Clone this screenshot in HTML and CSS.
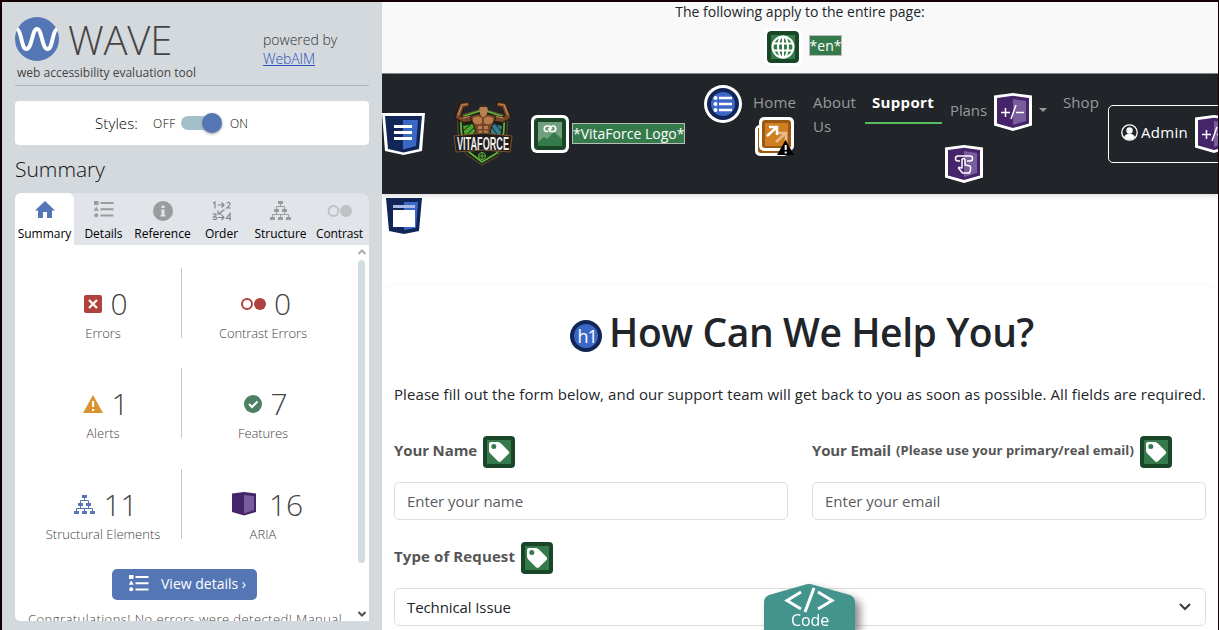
FILE: index.html
```html
<!DOCTYPE html>
<html lang="en">
<head>
<meta charset="utf-8">
<title>WAVE</title>
<link rel="stylesheet" href="styles.css">
</head>
<body>
<svg class="defs" width="0" height="0">
  <symbol id="list" viewBox="0 0 20 18"><path d="M0 1h4.500v4h-4.500zM6.500 2h13v2h-13zM2.200 6.500L4.800 10.800H-.300zM6.500 8.300h13v2h-13zM6.500 14.500h13v2h-13z"/><circle cx="2.200" cy="15.300" r="2"/></symbol>
  <symbol id="tree" viewBox="0 0 21 19"><path d="M8 0h5v3H8zM4 8h5v3H4zM12 8h5v3h-5zM0 16h5v3H0zM8 16h5v3H8zM16 16h5v3h-5z"/><path d="M10.500 3v3M6.500 8V5.500h8V8M6.500 11v2.500M14.500 11v2.500M2.500 16v-2.500h16V16M10.500 13.500V16" fill="none" stroke="currentColor"/></symbol>
  <symbol id="shield" viewBox="0 0 38 38"><path d="M0 2.500L19 0l19 2.500v30L19 38 0 32.500z" fill="#fff"/><path d="M3 5l16-2.300L35 5v25.500L19 35 3 30.500z" fill="#452469"/><path d="M19 6l13 2v20l-13 4z" fill="#795c9b"/></symbol>
  <symbol id="tag" viewBox="0 0 32 32"><rect width="32" height="32" rx="4" fill="#1a4628"/><path d="M4 4h24v24H4z" fill="#357a4b"/><path fill-rule="evenodd" d="M6 8q0-2 2-2h7q1.500 0 3 1.500l7.500 7.500q1.500 1.500 0 3L18 25.300q-1.500 1.200-3 0L7.300 17.500Q6 16 6 14.500zM13.300 10.500a2.500 2.500 0 1 0-5 0a2.500 2.500 0 1 0 5 0" fill="#fff"/></symbol>
</svg>
<div class="frame">
<aside class="side">
  <header class="brand">
    <div class="brand-left">
      <div class="logo">
        <svg width="44" height="44" viewBox="0 0 44 44"><circle cx="22" cy="22" r="22" fill="#5576b4"/><path d="M2 12C7 14 6 32 11.500 32S17 12 22 12s5 20 10.500 20S37 14 42 12" fill="none" stroke="#fff" stroke-width="4"/></svg>
        <span class="t wave">WAVE</span>
      </div>
      <div><span class="t tagline">web accessibility evaluation tool</span></div>
    </div>
    <div class="powered"><span class="t">powered by</span><br><a class="t aim">WebAIM</a></div>
  </header>
  <div class="styles-box"><span class="t sty">Styles:</span><span class="t off">OFF</span><div class="toggle"><i></i></div><span class="t on">ON</span></div>
  <h2><span class="t">Summary</span></h2>
  <nav class="tabs">
    <div class="tab active"><svg width="20" height="18" viewBox="0 0 20 18"><path d="M10 0L20 9.500h-3V17h-5v-6H8v6H3V9.500H0z" fill="#5576b4"/></svg><span class="t">Summary</span></div>
    <div class="tab"><svg class="g list-i" width="20" height="18"><use href="#list"/></svg><span class="t">Details</span></div>
    <div class="tab"><svg width="20" height="20"><circle cx="10" cy="10" r="10" fill="#999b9f"/><path d="M8.500 4.500h3v2.500h-3zM8 8.500h3.500v5.500h1v1.500H7.500V14h1v-4H8z" fill="#e1e4e8"/></svg><span class="t">Reference</span></div>
    <div class="tab"><svg width="20" height="20" fill="none" stroke="#85878b" stroke-width="1.200"><path d="M1 2.500L3 1v6.500M6 4h6M9.500 1.500L12 4 9.500 6.500M14.800 2.500q2-2.500 3.300 0 0 1.500-3.300 4.500h4M12.500 8.500l-6 4.500M6 9.500V13h3.500M.800 13.500q4-1.500 3 1.200L2 15.800q4 0 2 2.500H.800M6 16.500h6M9.500 14l2.500 2.500L9.500 19M19 17.500H14.500L18 12.500v7"/></svg><span class="t">Order</span></div>
    <div class="tab"><svg class="g" width="21" height="19"><use href="#tree"/></svg><span class="t">Structure</span></div>
    <div class="tab"><svg width="26" height="20"><circle cx="6.500" cy="10" r="5" fill="none" stroke="#bfc1c5" stroke-width="2"/><circle cx="19" cy="10" r="6" fill="#bfc1c5"/></svg><span class="t tb6">Contrast</span></div>
  </nav>
  <section class="panel">
    <div class="stats">
      <div class="stat"><div class="num"><svg width="18" height="18"><rect width="18" height="18" rx="2" fill="#af423c"/><path d="M5 5l8 8M13 5l-8 8" stroke="#fff" stroke-width="2.200"/></svg><b>0</b></div><span class="t l1">Errors</span></div>
      <div class="stat"><div class="num"><svg width="25" height="18"><circle cx="6" cy="9" r="5" fill="none" stroke="#af423c" stroke-width="2"/><circle cx="19" cy="9" r="6" fill="#af423c"/></svg><b>0</b></div><span class="t l2">Contrast Errors</span></div>
      <div class="stat"><div class="num"><svg width="20" height="18"><path d="M10 0l10 18H0z" fill="#d9932f"/><path d="M9 6h2.200v6H9zM9 14h2.200v2H9z" fill="#fff"/></svg><b>1</b></div><span class="t l3">Alerts</span></div>
      <div class="stat"><div class="num"><svg width="18" height="18"><circle cx="9" cy="9" r="9" fill="#4d7f63"/><path d="M5 9l3 3 5.500-5.500" fill="none" stroke="#fff" stroke-width="2"/></svg><b>7</b></div><span class="t l4">Features</span></div>
      <div class="stat"><div class="num"><svg class="blue" width="21" height="19"><use href="#tree"/></svg><b>11</b></div><span class="t l5">Structural Elements</span></div>
      <div class="stat"><div class="num"><svg class="cube" width="24" height="24"><path d="M0 1.500L12 0l12 1.500V20l-12 3.500L0 20z" fill="#452469"/><path d="M12 3l10 1v14l-10 3.500z" fill="#795c9b"/></svg><b>16</b></div><span class="t l6">ARIA</span></div>
    </div>
    <div class="btn"><svg width="20" height="18"><use href="#list"/></svg><span class="t">View details ›</span></div>
    <div class="congrats"><span class="t">Congratulations! No errors were detected! Manual</span></div>
    <div class="scroll"><svg width="8" height="6"><path d="M.500 5L4 1.500 7.500 5" fill="none" stroke="#b0b0b0" stroke-width="2"/></svg><i></i><svg width="8" height="6"><path d="M.500 1L4 4.500 7.500 1" fill="none" stroke="#505050" stroke-width="2"/></svg></div>
  </section>
</aside>
<main class="main">
  <div class="notice">
    <span class="t">The following apply to the entire page:</span>
    <div class="lang"><svg class="halo" width="32" height="32"><rect width="32" height="32" rx="4" fill="#1a4628"/><path d="M4 4h24v24H4z" fill="#357a4b"/><g fill="none" stroke="#fff" stroke-width="2"><circle cx="16" cy="16" r="10.500"/><ellipse cx="16" cy="16" rx="5" ry="10.500"/><path d="M16 5v22M6 12.500h20M6 19.500h20"/></g></svg><span class="t alt en">*en*</span></div>
  </div>
  <div class="nav">
    <svg class="n-doc" width="43" height="42"><path d="M0 0h43l-3 38-18.500 4L3 38z" fill="#fff"/><path d="M3 3h37l-3 33-15.500 3.500L6 36z" fill="#112557"/><path d="M21 7h15l-2 26-13 3.500z" fill="#3b67c7"/><path d="M12 12h18v3H12zM12 18h18v3H12zM12 24h18v3H12z" fill="#fff"/></svg>
    <svg class="n-logo" width="60" height="66" viewBox="0 0 60 66">
      <path d="M5 16L30 9l24 7q2 30-9 40L29 65 14 55Q3 44 5 16z" fill="#17221a" stroke="#6b4b2d"/>
      <path d="M8 17L30 10l21 7q1 25-7 36L29 62 16 52Q7 42 8 17z" fill="none" stroke="#63b13a" stroke-width="1.800"/>
      <path d="M10 26l10-2 4 12-12 1z" fill="#4da332"/><path d="M39 24l10 2-2 11-12-1z" fill="#367f8e"/>
      <path d="M10 31l7-6M12 36l10-9M17 37l6-6M38 26l8 11M43 25l5 6M36 31l4 6" stroke="#17221a"/>
      <g fill="none" stroke-linecap="round" stroke-linejoin="round">
        <path d="M14 4.500L9 5.500 5 17l6 3 11-2M46 4.500l5 1L55 17l-6 3-11-2" stroke="#2a180d" stroke-width="6"/>
        <path d="M14 4.500L9 5.500 5 17l6 3 11-2M46 4.500l5 1L55 17l-6 3-11-2" stroke="#75462a" stroke-width="4"/>
        <path d="M14 4L9 5 5 15M46 4l5 1 4 10M10 18l9-2M50 18l-9-2" stroke="#c98f5a" stroke-width="1.200"/>
      </g>
      <path d="M17 17q7-5 13-2 6-3 13 2l-4 9-3 10H24l-3-10z" fill="#75462a" stroke="#2a180d"/>
      <path d="M20 18q5-3 9 0v5q-5 3-9-1zM31 18q4-3 9 0v4q-4 4-9 1z" fill="#b87d4a"/>
      <path d="M25 26h4v3h-4zM31 26h4v3h-4zM25.500 30.500h3.500v2.500h-3.500zM31 30.500h3.500v2.500H31z" fill="#b87d4a"/>
      <path d="M26 7h9l-1 7-3 3h-2l-2-3z" fill="#bd8050"/><path d="M25.500 9Q25 4 30.500 4T35.500 9l-2-2h-6z" fill="#342922"/>
      <path d="M1 36l29-3 29 3-2 16-27-2-27 2z" fill="#201c19" stroke="#7e542d"/>
      <text x="4" y="50" textLength="52" lengthAdjust="spacingAndGlyphs">VITAFORCE</text>
      <circle cx="29" cy="56" r="3.500" fill="none" stroke="#63b13a"/><path d="M26 56h6M29 53v6" stroke="#63b13a"/>
    </svg>
    <svg class="n-img" width="38" height="38"><rect width="38" height="38" rx="6" fill="#fff"/><rect x="3" y="3" width="32" height="32" rx="4" fill="#1a4628"/><path d="M7 7h24v24H7z" fill="#709f7d"/><path d="M7 27l6-5 3 2 7-7 8 7v7H7z" fill="#357a4b"/><path d="M17 16.500h-2a3 3 0 0 1 0-5.500h3.500q3 1 .500 4M20.500 11H23a3 3 0 0 1 0 5.500h-3.500q-3-1-.500-4" fill="none" stroke="#fff" stroke-width="1.700"/></svg>
    <span class="t alt vl">*VitaForce Logo*</span>
    <svg class="n-list" width="38" height="38"><circle cx="19" cy="19" r="19" fill="#fff"/><circle cx="19" cy="19" r="16" fill="#112557"/><circle cx="19" cy="19" r="12" fill="#3b67c7"/><path d="M15 11.700h13v2.600H15zM15 17.700h13v2.600H15zM15 23.700h13v2.600H15z" fill="#fff"/><g fill="#fff"><circle cx="11.500" cy="13" r="2"/><circle cx="11.500" cy="19" r="2"/><circle cx="11.500" cy="25" r="2"/></g></svg>
    <div class="n-home"><span class="t lk hm">Home</span>
      <svg width="40" height="40"><rect y="8" width="34" height="31" rx="5" fill="#fff"/><path d="M3 11h4v22h22v3H6q-3 0-3-3z" fill="#9a5a13"/><rect x="4" width="35" height="34" rx="5" fill="#fff"/><rect x="7" y="3" width="29" height="28" rx="3" fill="#9a5a13"/><path d="M10 6h23v23H10z" fill="#cf7e22"/><path d="M21 25l10-9M23 16h8v8" fill="none" stroke="#e8b98a" stroke-width="2.500"/><path d="M12 19l10-9M14 10h8v8" fill="none" stroke="#fff" stroke-width="2.500"/><path d="M30.500 23L39 38H22z" fill="#000"/><path d="M29.700 28h2v5h-2zM29.700 34.500h2v2h-2z" fill="#fff"/></svg>
    </div>
    <div class="n-about"><span class="t lk ab">About</span><br><span class="t lk">Us</span></div>
    <div class="n-sup"><span class="t sp">Support</span></div>
    <div class="n-plans"><div class="prow"><span class="t lk pl">Plans</span><svg width="38" height="38"><use href="#shield"/><path d="M7 19.500h9M11.500 15v9M22 12l-5 14M22 19.500h8" stroke="#fff" stroke-width="1.500"/></svg><i class="caret"></i></div>
      <svg class="touch" width="38" height="38"><use href="#shield"/><g fill="none" stroke="#fff" stroke-width="1.500"><path d="M15 16h-2a2.500 2.500 0 0 1 0-5h12a2.500 2.500 0 0 1 0 5h-3"/><path d="M17 23.500V14.500q1.500-2 3 0V20l5 1q1 1 .500 4l-1 3h-7L13.500 23q.500-1.500 3.500.500"/></g></svg></div>
    <span class="t lk sh">Shop</span>
    <div class="n-admin"><svg width="17" height="17"><circle cx="8.500" cy="8.500" r="7.700" fill="none" stroke="#fff" stroke-width="1.300"/><circle cx="8.500" cy="6.500" r="3.200" fill="#fff"/><path d="M3 13q2-3.500 5.500-3.500T14 13q-2 2.800-5.500 2.800T3 13z" fill="#fff"/></svg><span class="t ad">Admin</span><svg class="sh2" width="38" height="38"><use href="#shield"/><path d="M7 19.500h9M11.500 15v9M22 12l-5 14M22 19.500h8" stroke="#fff" stroke-width="1.500"/></svg></div>
  </div>
  <div class="below"><svg width="36" height="36"><path d="M0 0h36l-3 33-15 3-15-3z" fill="#112557"/><path d="M18 4h14l-2 26-12 2z" fill="#3b67c7"/><path d="M7 7h22v3H7z" fill="#a9bbe5"/><path d="M7 12h22v17H7z" fill="#fff"/></svg></div>
  <div class="card">
    <h1><svg width="32" height="32"><circle cx="16" cy="16" r="16" fill="#112557"/><circle cx="16" cy="16" r="12" fill="#3b67c7"/><text x="7.500" y="22.500">h1</text></svg><span class="t h1t">How Can We Help You?</span></h1>
    <p><span class="t intro">Please fill out the form below, and our support team will get back to you as soon as possible. All fields are required.</span></p>
    <div class="fields">
      <div><div class="label"><span class="t f1">Your Name</span><svg width="32" height="32"><use href="#tag"/></svg></div><div class="input ph"><span class="t i1">Enter your name</span></div></div>
      <div><div class="label"><span class="t f2">Your Email</span><small class="t f3">(Please use your primary/real email)</small><svg width="32" height="32"><use href="#tag"/></svg></div><div class="input ph"><span class="t">Enter your email</span></div></div>
    </div>
    <div class="label l-req"><span class="t f4">Type of Request</span><svg width="32" height="32"><use href="#tag"/></svg></div>
    <div class="input select"><span class="t i3">Technical Issue</span><svg width="12" height="8"><path d="M1 1l5 5 5-5" fill="none" stroke="#343a40" stroke-width="2"/></svg></div>
  </div>
</main>
</div>
<div class="code"><svg width="91" height="46"><path d="M0 18q0-5 5-7L40 1q5-2 10 0l36 10q5 2 5 7v28H0z" fill="#42948d"/><path d="M37 8l-14 8.500L37 25M54 8l14 8.500L54 25M50 4l-9 24" fill="none" stroke="#fff" stroke-width="3"/></svg><span class="t cd">Code</span></div>
</body>
</html>
```
FILE: styles.css
```css
* { box-sizing: border-box; }
body { margin: 0; width: 1219px; height: 630px; overflow: hidden; position: relative; font-family: "Open Sans", "Noto Sans", sans-serif; color: #212529; }
svg { display: block; flex: none; }
.defs { position: absolute; }
.t { white-space: nowrap; }
.frame { display: flex; height: 630px; border: solid #140005; border-width: 2px 1px 0 2px; }

/* Sidebar */
.side { width: 380px; flex: none; background: #d4d9dd; padding: 15px 13px 0; display: flex; flex-direction: column; font-weight: 300; }
.brand { height: 69px; border-bottom: 1px solid #afb5b8; display: flex; }
.brand-left { width: 248px; }
.logo { display: flex; gap: 9px; height: 44px; color: #444; }
.wave { font-size: 40px; line-height: 46px; letter-spacing: -.2px; }
.tagline { display: block; margin: 3px 0 0 2px; font-size: 12px; line-height: 18px; font-weight: 400; color: #444; }
.powered { font-size: 14px; line-height: 19px; padding-top: 13px; color: #333; }
.aim { letter-spacing: -.09px; color: #2b4fc0; text-decoration: underline; }
.styles-box { height: 44px; margin-top: 15px; background: #fff; border-radius: 4px; display: flex; align-items: center; padding-left: 80px; color: #000; }
.sty { width: 58px; font-size: 15px; letter-spacing: .1px; }
.off, .on { font-size: 12px; }
.off { width: 28px; letter-spacing: .5px; }
.toggle { width: 49px; padding-top: 3px; }
.toggle::before { content: ""; display: block; width: 34px; height: 14px; border-radius: 7px; background: #a5bfca; }
.toggle i { display: block; width: 20px; height: 20px; margin: -17px 0 0 21px; border-radius: 50%; background: #5576b4; box-shadow: 0 1px 3px #999; }
h2 { margin: 9px 0 8px; height: 31px; font-size: 21px; line-height: 31px; font-weight: 300; color: #111; }
.tabs { display: flex; height: 52px; flex: none; background: #e1e4e8; border-radius: 8px 8px 0 0; }
.tab { width: 59px; padding-top: 8px; display: flex; flex-direction: column; align-items: center; justify-content: space-between; font-size: 12px; line-height: 23px; font-weight: 400; color: #000; }
.tab.active { background: #fff; border-radius: 6px 6px 0 0; }
.list-i { margin-top: -1px; }
.tb6 { letter-spacing: -.12px; }
.g { color: #999b9f; fill: #999b9f; }
.blue { color: #5576b4; fill: #5576b4; }
.panel { height: 376px; flex: none; background: #fff; border-radius: 0 0 0 5px; position: relative; overflow: hidden; }
.stats { display: grid; grid-template-columns: 167px 162px; grid-auto-rows: 70px; row-gap: 30.400px; padding-top: 23px; }
.stat { text-align: center; padding-top: 16px; font-size: 13px; line-height: 18px; color: #444; }
.stat:nth-child(odd) { border-right: 1px solid #c5c8ca; padding-left: 10px; }
.l1 { letter-spacing: -.12px; }
.l2 { letter-spacing: -.1px; }
.l4 { letter-spacing: -.11px; }
.l6 { letter-spacing: .09px; }
.num { height: 40px; display: flex; align-items: center; justify-content: center; gap: 8px; padding-left: 6px; }
.num b { font-size: 30px; line-height: 40px; font-weight: 300; }
.cube { margin: -2px 5px 0 3px; }
.btn { width: 145px; height: 31px; margin: 30px 0 0 97px; border-radius: 5px; background: #5576b4; color: #fff; fill: #fff; display: flex; align-items: center; padding: 0 0 2px 17px; gap: 12px; font-size: 14px; font-weight: 400; }
.congrats { margin: 9px 0 0 13px; font-size: 13px; line-height: 20px; color: #444; letter-spacing: .45px; }
.scroll { position: absolute; right: 3px; top: 4px; width: 8px; }
.scroll i { display: block; width: 7px; height: 303px; margin: 5px 0 48px; border-radius: 4px; background: #d2dce3; }

/* Evaluated page */
.main { flex: 1; overflow: hidden; background: #fff; }
.notice { height: 72px; background: #f9f9f9; border-bottom: 1px solid #777; text-align: center; font-size: 14px; line-height: 20px; }
.lang { display: flex; justify-content: center; align-items: center; gap: 10px; margin-top: 9px; padding-left: 9px; }
.halo { border-radius: 4px; box-shadow: 0 0 0 3px #fff; }
.alt { background: #357a4b; border: 1px solid #bbb; color: #fff; font-size: 14px; line-height: 19px; }
.en { margin-top: -3px; }
.nav { height: 120px; background: #212529; display: flex; align-items: flex-start; box-shadow: 0 2px 5px #ddd; font-size: 15px; line-height: 24px; }
.nav > * { flex: none; }
.lk { color: #989a9c; }
.n-doc { margin: 39px 28px 0 0; }
.n-logo { margin: 26px 18px 0 0; }
.n-logo text { font: bold 19px "Liberation Sans", sans-serif; fill: #eee; }
.n-img { margin: 41px 3px 0 0; }
.vl { margin: 49px 19px 0 0; width: 113px; }
.n-list { margin: 11px 11px 0 0; }
.n-home { width: 60px; margin-top: 16px; }
.n-home svg { margin: 3px 0 0 2px; }
.hm, .ab { letter-spacing: .15px; }
.n-about { width: 52px; margin-top: 16px; }
.n-sup { width: 77px; height: 34px; margin: 16px 3px 0 0; border-bottom: 2px solid #58bd60; font-weight: 700; color: #fff; padding-left: 7px; line-height: 25px; }
.sp { letter-spacing: .33px; }
.n-plans { width: 118px; margin-top: 19px; }
.prow { display: flex; align-items: center; padding-left: 5px; }
.pl { letter-spacing: -.1px; margin-top: -4px; }
.prow svg { margin: 0 7px 0 7px; }
.caret { border: 4px solid transparent; border-top-color: #989a9c; border-bottom: 0; margin-top: -4px; }
.touch { margin-top: 14px; }
.sh { margin-top: 16px; width: 45px; letter-spacing: .09px; }
.n-admin { width: 140px; height: 58px; margin-top: 31px; border: 1px solid #fff; border-radius: 5px; display: flex; align-items: center; padding: 0 0 4px 12px; color: #fff; }
.ad { margin: 0 7px 0 3px; letter-spacing: .29px; }
.sh2 { margin-top: 4px; }
.below { height: 92px; padding: 4px 0 0 4px; }
.card { height: 400px; padding: 26px 12px 0; border-radius: 12px; box-shadow: 0 0 8px #f6f6f6; }
h1 { margin: 0; height: 44px; display: flex; justify-content: center; gap: 7px; font-size: 39px; line-height: 39px; font-weight: 600; color: #212529; padding-left: 4px; }
.h1t { letter-spacing: -.42px; }
h1 svg { margin-top: 8px; }
h1 text { font: 18px "Open Sans", sans-serif; fill: #fff; letter-spacing: -1px; }
p { margin: 26px 0 0; height: 25px; font-size: 15px; line-height: 24px; }
.intro { letter-spacing: .08px; }
.fields { display: grid; grid-template-columns: 394px 394px; gap: 24px; margin-top: 29px; }
.label { height: 32px; display: flex; align-items: center; gap: 6px; font-size: 15px; font-weight: 700; color: #555; line-height: 30px; }
.label .t { margin-top: -4px; }
.label small { font-size: 13px; margin-left: -1px; }
.f1 { letter-spacing: -.12px; }
.f2 { letter-spacing: -.16px; }
.f3 { letter-spacing: .06px; }
.f4 { letter-spacing: .11px; }
.input { height: 38px; margin-top: 14px; border: 1px solid #dedede; border-radius: 5px; padding: 0 12px; font-size: 15px; line-height: 36px; }
.ph { color: #595c5f; }
.i1 { letter-spacing: -.06px; }
.i3 { letter-spacing: -.1px; }
.l-req { margin-top: 22px; }
.select { display: flex; align-items: center; justify-content: space-between; }
.select svg { margin-right: 2px; }

/* Code panel handle */
.code { position: absolute; left: 764px; top: 584px; width: 91px; height: 60px; filter: drop-shadow(5px 5px 4px #888); }
.cd { position: absolute; left: 27px; top: 25px; color: #fff; font-size: 16px; line-height: 22px; letter-spacing: -.12px; }
```
